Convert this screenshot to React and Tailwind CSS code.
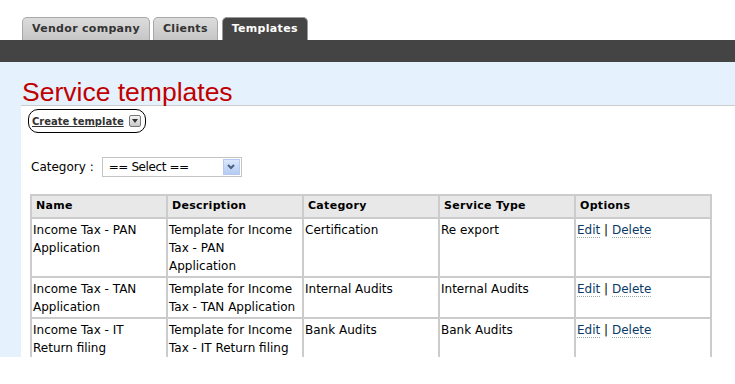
import React from "react";

const rows = [
  {
    id: 1,
    name: ["Income Tax - PAN", "Application"],
    description: ["Template for Income", "Tax - PAN", "Application"],
    category: "Certification",
    serviceType: "Re export",
  },
  {
    id: 2,
    name: ["Income Tax - TAN", "Application"],
    description: ["Template for Income", "Tax - TAN Application"],
    category: "Internal Audits",
    serviceType: "Internal Audits",
  },
  {
    id: 3,
    name: ["Income Tax - IT", "Return filing"],
    description: ["Template for Income", "Tax - IT Return filing"],
    category: "Bank Audits",
    serviceType: "Bank Audits",
  },
];

const tabs = [
  { label: "Vendor company", active: false },
  { label: "Clients", active: false },
  { label: "Templates", active: true },
];

const cell =
  "border-2 border-[#cccccc] align-top pl-[1px] pr-[2px] pt-[2px] pb-[1px] leading-[18px] whitespace-nowrap";

const Lines = ({ lines }) =>
  lines.map((line, i) => (
    <React.Fragment key={i}>
      {i > 0 && <br />}
      {line}
    </React.Fragment>
  ));

const App = () => {
  return (
    <div className="w-[735px] h-[384px] overflow-hidden bg-white text-[12px] text-black font-['DejaVu_Sans',Verdana,sans-serif]">
      {/* tabs */}
      <div className="h-[40px] flex items-end gap-[3px] pl-[22px]">
        {tabs.map((tab) => (
          <div
            key={tab.label}
            className={
              tab.active
                ? "ml-[1px] h-[23px] px-[9px] flex items-center rounded-t-[5px] border border-b-0 border-[#9a9a9a] bg-[#454545] text-white font-bold text-[11px] tracking-[0.3px]"
                : "h-[23px] px-[9px] flex items-center rounded-t-[5px] border border-b-0 border-[#a8a8a8] bg-gradient-to-b from-[#dcdcdc] to-[#c6c6c6] text-[#333] font-bold text-[11px] tracking-[0.3px]"
            }
          >
            {tab.label}
          </div>
        ))}
      </div>
      <div className="h-[22px] bg-[#444]" />

      {/* page */}
      <div className="h-[295px] bg-[#e5f1fc] overflow-hidden">
        <div className="h-[43px] pl-[22px] flex items-end">
          <h1 className="text-[26.5px] leading-[26px] text-[#c00000] font-['Liberation_Sans',Arial,sans-serif]">
            Service templates
          </h1>
        </div>
        <div className="ml-[21px] h-full bg-white border-t border-[#cccccc] pt-[3px]">
          <div className="ml-[7px] inline-flex items-center gap-[5px] h-[24px] pl-[3px] pr-[4px] border border-black rounded-[10px]">
            <span className="font-bold text-[10px] underline text-[#333]">Create template</span>
            <span className="w-[12px] h-[12px] border border-[#777] rounded-[2px] bg-gradient-to-b from-[#f4f4f4] to-[#c8c8c8] flex items-center justify-center">
              <svg width="6" height="4" viewBox="0 0 6 4">
                <path d="M0 0h6L3 4z" fill="#333" />
              </svg>
            </span>
          </div>

          <div className="mt-[24px] ml-[10px] flex items-center gap-[8px]">
            <span>Category :</span>
            <div className="w-[140px] h-[20px] border border-[#c4c4c4] flex items-center justify-between pl-[6px] pr-[1px]">
              <span className="text-[12px] tracking-[-0.4px]">== Select ==</span>
              <span className="w-[17px] h-[16px] bg-gradient-to-b from-[#dbe7fb] to-[#b4cbf3] border border-[#b7c9ee] flex items-center justify-center">
                <svg width="8" height="6" viewBox="0 0 8 6">
                  <path d="M1 1l3 3 3-3" stroke="#4d6185" strokeWidth="2" fill="none" />
                </svg>
              </span>
            </div>
          </div>

          <table className="mt-[17px] ml-[9px] w-[681px] table-fixed border-collapse">
            <thead>
              <tr className="bg-[#e8e8e8] h-[23px]">
                {["Name", "Description", "Category", "Service Type", "Options"].map((h) => (
                  <th
                    key={h}
                    className="border-2 border-[#cccccc] text-left pl-[4px] font-bold text-[11px] tracking-[0.3px] w-[136px]"
                  >
                    {h}
                  </th>
                ))}
              </tr>
            </thead>
            <tbody>
              {rows.map(({ id, name, description, category, serviceType }) => (
                <tr key={id}>
                  <td className={cell}>
                    <Lines lines={name} />
                  </td>
                  <td className={cell}>
                    <Lines lines={description} />
                  </td>
                  <td className={cell}>{category}</td>
                  <td className={cell}>{serviceType}</td>
                  <td className={cell}>
                    <a className="text-[#0a3a66] border-b border-dotted border-[#9aa]">Edit</a>
                    {" | "}
                    <a className="text-[#0a3a66] border-b border-dotted border-[#9aa]">Delete</a>
                  </td>
                </tr>
              ))}
            </tbody>
          </table>
        </div>
      </div>
    </div>
  );
};

export default App;
